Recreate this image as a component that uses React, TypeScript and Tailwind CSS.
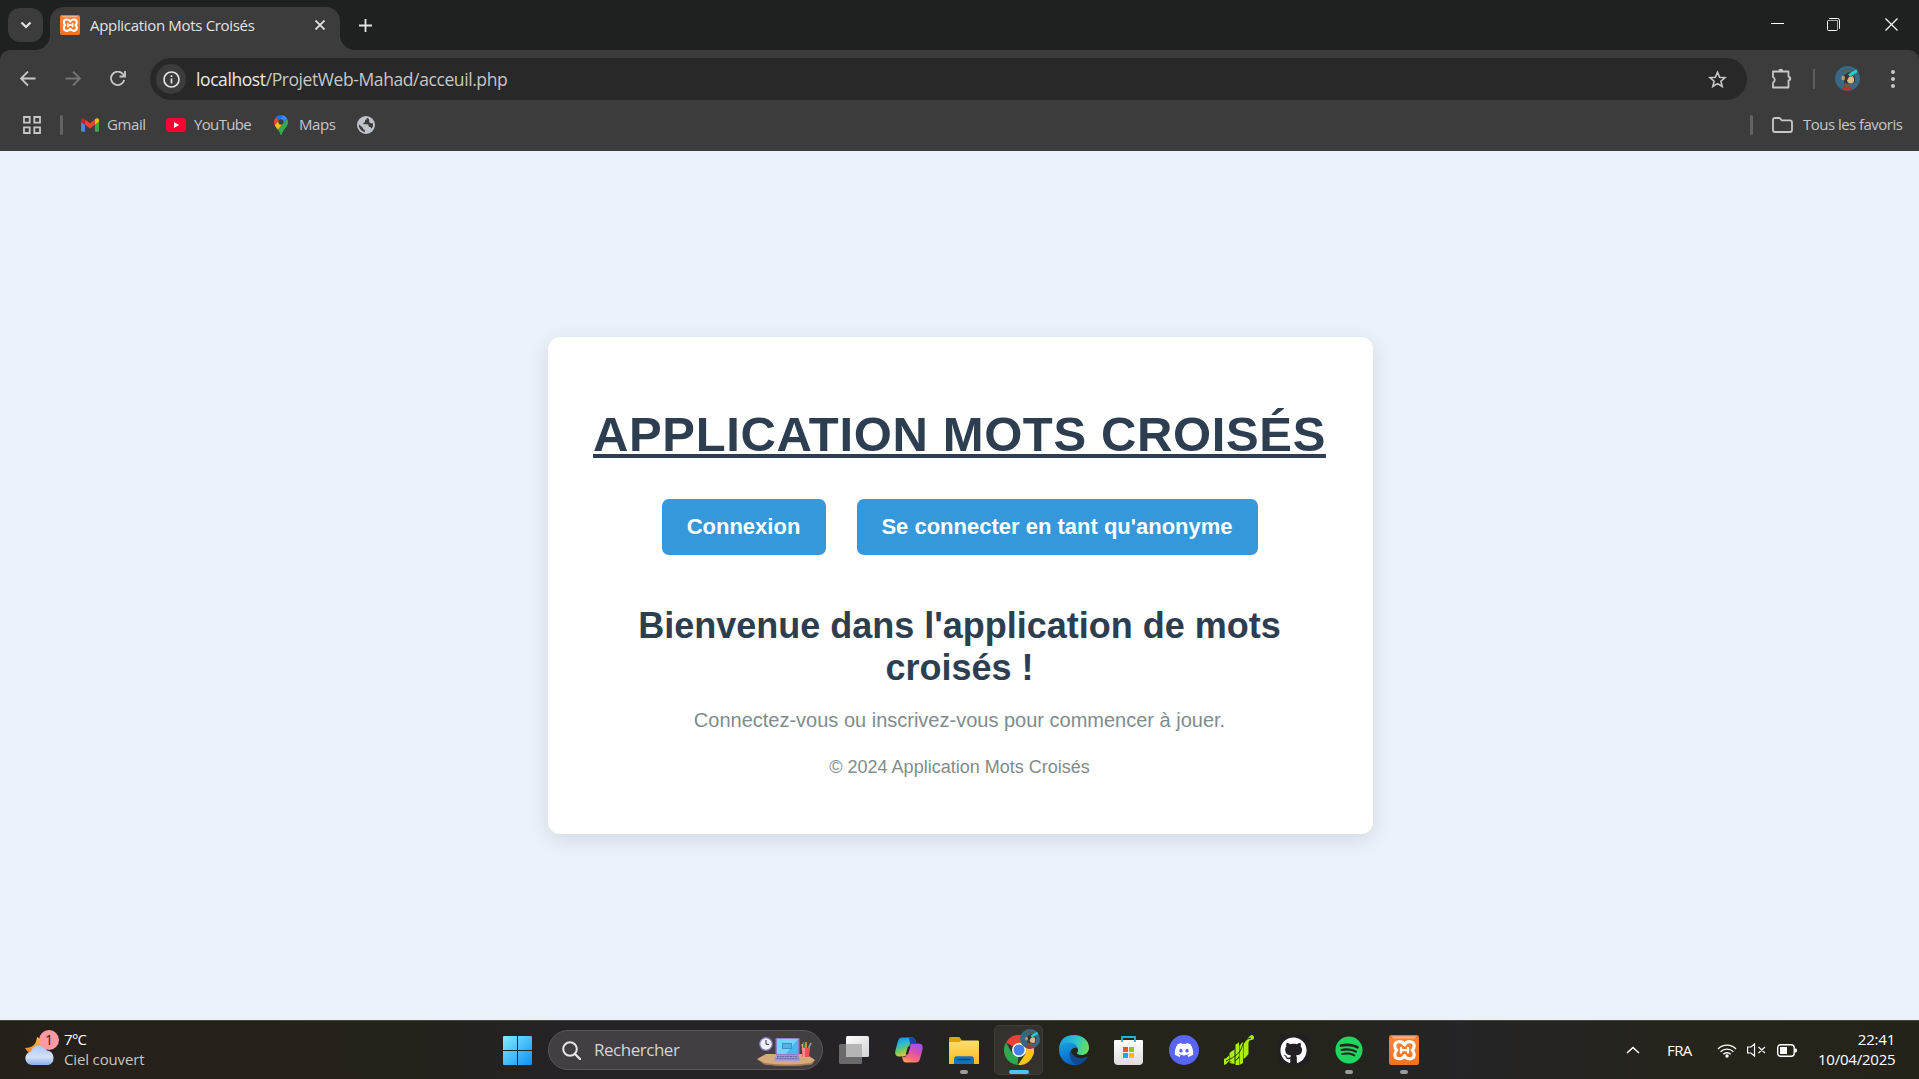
import React from "react";
import { FaDiscord, FaSpotify, FaGithub } from "react-icons/fa";

type IconProps = { className?: string };

function Xampp({ className }: IconProps) {
  return (
    <svg className={className} viewBox="0 0 30 30" fill="none">
      <defs><linearGradient id="xa" x2="0" y2="1"><stop stopColor="#e8732c" /><stop offset=".15" stopColor="#f98238" /><stop offset="1" stopColor="#f3721d" /></linearGradient></defs>
      <rect width="30" height="30" rx="2.500" fill="url(#xa)" />
      <path d="M3 1.500h24q0 2-3 2H6q-3 0-3-2z" fill="#fbb48a" />
      <path d="M15.500 9.800C13.500 5.500 5.800 5.500 5.800 11c0 2 .8 3.200 2 4.200-1.300 1-2 2.400-2 4.300 0 5.500 7.700 5.500 9.700 1.200 2 4.300 9.700 4.300 9.700-1.200 0-1.900-.7-3.300-2-4.300 1.200-1 2-2.200 2-4.200 0-5.500-7.700-5.500-9.700-1.200z" stroke="#fff" strokeWidth="3.200" strokeLinejoin="round" />
      <path d="M12 12.800v4.800M19 12.800v4.800M12 15.200h7" stroke="#fff" strokeWidth="2.300" strokeLinecap="round" />
    </svg>
  );
}

function Gmail() {
  return (
    <svg className="h-[14px] w-[18px]" viewBox="52 42 88 66">
      <path fill="#4285f4" d="M58 108h14V74L52 59v43c0 3.320 2.690 6 6 6" />
      <path fill="#34a853" d="M120 108h14c3.320 0 6-2.690 6-6V59l-20 15" />
      <path fill="#fbbc04" d="M120 48v26l20-15v-8c0-7.420-8.470-11.650-14.400-7.200" />
      <path fill="#ea4335" d="M72 74V48l24 18 24-18v26L96 92" />
      <path fill="#c5221f" d="M52 51v8l20 15V48l-5.600-4.200c-5.940-4.450-14.400-.22-14.400 7.200" />
    </svg>
  );
}

function MapsPin() {
  return (
    <svg className="h-[20px] w-[14px]" viewBox="0 0 92.300 132.300">
      <path fill="#1a73e8" d="M60.200 2.200C55.800.8 51 0 46.100 0 32 0 19.300 6.400 10.800 16.500l21.800 18.300L60.200 2.200z" />
      <path fill="#ea4335" d="M10.800 16.500C4.100 24.500 0 34.900 0 46.100c0 8.700 1.700 15.700 4.600 22l28-33.300-21.800-18.300z" />
      <path fill="#4285f4" d="M46.200 28.500c9.800 0 17.700 7.900 17.700 17.700 0 4.300-1.600 8.300-4.200 11.400 0 0 13.900-16.600 27.500-32.700-5.600-10.800-15.300-19-27-22.700L32.600 34.800c3.300-3.800 8.100-6.300 13.600-6.300" />
      <path fill="#fbbc04" d="M46.200 63.800c-9.800 0-17.700-7.900-17.700-17.700 0-4.300 1.500-8.300 4.100-11.300l-28 33.300c4.800 10.600 12.800 19.200 21 29.900l34.100-40.500c-3.300 3.900-8.100 6.300-13.500 6.300" />
      <path fill="#34a853" d="M59.100 109.200c15.400-24.100 33.300-35 33.300-63 0-7.700-1.900-14.900-5.200-21.300L25.600 98c2.600 3.400 5.300 7.300 7.900 11.300 9.400 14.500 6.800 23.100 12.800 23.100s3.400-8.700 12.800-23.200" />
    </svg>
  );
}

function Avatar({ className }: IconProps) {
  return (
    <svg className={className} viewBox="0 0 25 25">
      <circle cx="12.500" cy="12.500" r="12.500" fill="#386885" />
      <path d="M7.500 5.500q5-3 9.500-1" stroke="#5a5840" strokeWidth="1.200" fill="none" />
      <path d="M9 9l5-3 3 2 3 3v5l-3 2-4-1-2 5H9q1.500-4 0-7z" fill="#3d3328" />
      <path d="M6.500 10.500q2-1.500 3.500.5l-.5 3q-2 1-3-1z" fill="#b89c72" />
      <path d="M14 11l4-1 1 3q.5 4-2.500 4.500-4 0-4.500-3z" fill="#dbbb8c" />
      <path d="M10 17l4 1 1 4h-6z" fill="#6d5a36" />
      <path d="M6.500 21q5 1.800 11-.5l-1 3q-4.500 2-9 .3z" fill="#c62a31" />
      <path d="M13 8.500l8.500-5.200 1 2.800L15 10.700z" fill="#27d3cf" />
    </svg>
  );
}

function BrowserTop() {
  return (
    <header className="bg-[#1f2121] font-['Open_Sans',sans-serif] text-[#e3e3e3]">
      <div className="flex h-[50px] items-start">
        <button className="relative z-10 mt-2 ml-2 flex h-[34px] w-[35px] items-center justify-center rounded-[12px] bg-[#3c3c3c]">
          <svg className="h-[8px] w-[12px]" viewBox="0 0 12 8" fill="none" stroke="#e3e3e3" strokeWidth="2.200"><path d="M1.500 1.500 6 6l4.500-4.500" /></svg>
        </button>
        <div className="relative mt-[7px] ml-[7px] flex h-[43px] w-[290px] items-start rounded-t-[14px] bg-[#3c3c3c]">
          <span className="absolute bottom-0 -left-[15px] size-[15px] bg-[radial-gradient(circle_at_0_0,transparent_14.500px,#3c3c3c_15.500px)]" />
          <span className="absolute -right-[15px] bottom-0 size-[15px] bg-[radial-gradient(circle_at_100%_0,transparent_14.500px,#3c3c3c_15.500px)]" />
          <Xampp className="mt-2 ml-[10px] size-5 shrink-0" />
          <span className="mt-[8px] ml-[10px] w-[216px] text-[15px] leading-[20px] tracking-[-0.320px] whitespace-nowrap">Application Mots Croisés</span>
          <svg className="mt-[13px] ml-[9px] h-[10px] w-[10px]" viewBox="0 0 10 10" stroke="#e3e3e3" strokeWidth="1.800"><path d="M.5.500l9 9M9.500.500l-9 9" /></svg>
        </div>
        <svg className="mt-[19px] ml-[19px] h-[13px] w-[13px]" viewBox="0 0 13 13" stroke="#e3e3e3" strokeWidth="1.800"><path d="M6.500 0v13M0 6.500h13" /></svg>
        <div className="ml-auto flex">
          <svg className="mt-[23px] h-px w-[13px]" viewBox="0 0 13 1"><path d="M0 0h13v1H0z" fill="#fff" /></svg>
          <svg className="mt-[18px] ml-[43px] h-[13px] w-[13px]" viewBox="0 0 13 13" fill="none" stroke="#fff"><path d="M2.500 1V.5h8q2 0 2 2v8H12" /><rect x=".5" y="2.500" width="10" height="10" rx="1" /><path d="M10.500 12V2.500H2" stroke="#aaa" /></svg>
          <svg className="mt-[18px] mr-[21px] ml-[45px] h-[13px] w-[13px]" viewBox="0 0 13 13" stroke="#fff" strokeWidth="1.200"><path d="M.5.500l12 12M12.500.500l-12 12" /></svg>
        </div>
      </div>

      <div className="h-[101px] rounded-t-[10px] bg-[#3c3c3c]">
        <div className="flex h-[58px] items-center">
          <svg className="ml-[20px] h-4 w-4" viewBox="0 0 16 16" fill="none" stroke="#c7c7c7" strokeWidth="1.800"><path d="M15.500 7.500H1.500M8 .5l-7 7 7 7" /></svg>
          <svg className="ml-[29px] h-4 w-4" viewBox="0 0 16 16" fill="none" stroke="#757575" strokeWidth="1.800"><path d="M.5 7.500h14M8 .5l7 7-7 7" /></svg>
          <svg className="ml-[29px] h-4 w-4" viewBox="0 0 16 16" fill="none" stroke="#c7c7c7" strokeWidth="1.800"><path d="M14.200 9A6.700 6.700 0 1 1 12.700 2.900L15 5.500" /><path d="M15 0V5.500H9.500" /></svg>
          <div className="ml-[24px] flex h-[42px] w-[1597px] items-center rounded-full bg-[#282828]">
            <span className="ml-[6px] flex size-[30px] items-center justify-center rounded-full bg-[#3c3c3c]">
              <svg className="size-[17px]" viewBox="0 0 17 17" fill="none" stroke="#e3e3e3" strokeWidth="1.700"><circle cx="8.500" cy="8.500" r="7.500" /><path d="M8.500 7.500v5M8.500 4.300V6" /></svg>
            </span>
            <span className="ml-[10px] text-[17.500px] leading-6 tracking-[-0.410px] whitespace-nowrap text-[#c7c7c7]"><span className="text-[#e8e8e8]">localhost</span>/ProjetWeb-Mahad/acceuil.php</span>
            <svg className="mr-[20px] ml-auto h-[19px] w-[19px]" viewBox="0 0 19 19" fill="none" stroke="#c7c7c7" strokeWidth="1.600"><path d="M9.500 2.300l2.100 5 5.400.4-4.100 3.500 1.300 5.300-4.700-2.900-4.700 2.900 1.300-5.300L2 7.700l5.400-.4z" /></svg>
          </div>
          <svg className="ml-[24px] h-[22px] w-[22px]" viewBox="0 0 22 22" fill="none" stroke="#c7c7c7" strokeWidth="1.800"><path d="M2 3.500h15.500v5.300a1.800 1.800 0 0 1 0 3.600V19.500H2v-4.800a3.200 3.200 0 0 0 0-5.700z" strokeLinejoin="round" /><path d="M7.500 3a2.300 2.300 0 0 1 4.600 0zM18 8.700a2 2 0 0 1 0 4z" fill="#c7c7c7" stroke="none" /></svg>
          <span className="ml-[20px] h-5 w-[2px] bg-[#5c5c5c]" />
          <Avatar className="mb-px ml-[20px] h-[25px] w-[25px]" />
          <svg className="mb-px ml-[31px] h-[18px] w-[4px]" viewBox="0 0 4 18" fill="#c7c7c7"><circle cx="2" cy="2" r="2" /><circle cx="2" cy="9" r="2" /><circle cx="2" cy="16" r="2" /></svg>
        </div>
        <div className="flex h-[34px] items-center text-[15px] tracking-[-0.400px] text-[#c7c7c7]">
          <svg className="ml-[23px] h-[18px] w-[18px]" viewBox="0 0 18 18" fill="none" stroke="#c7c7c7" strokeWidth="1.800"><path d="M1 1h5.700v5.700H1zM11.300 1H17v5.700h-5.700zM1 11.300h5.700V17H1zM11.300 11.300H17V17h-5.700z" /></svg>
          <span className="mr-[18px] ml-[19px] h-5 w-[3px] rounded-full bg-[#636363]" />
          <Gmail />
          <span className="mb-[2px] ml-[8px] w-[59px]">Gmail</span>
          <svg className="h-[14px] w-5" viewBox="0 0 20 14"><rect width="20" height="14" rx="3.500" fill="#ff0033" /><path d="M8 4l5 3-5 3z" fill="#fff" /></svg>
          <span className="mb-[2px] ml-[8px] w-[80px] tracking-[-0.650px]">YouTube</span>
          <MapsPin />
          <span className="mb-[2px] ml-[11px] w-[58px]">Maps</span>
          <svg className="h-[18px] w-[18px]" viewBox="0 0 18 18"><circle cx="9" cy="9" r="9" fill="#c0c4ca" /><path d="M10 1.800q-.2 2-2 2.500v2q-2 .2-1.700 1.900h4q1.400 0 1.400 2.400 2 .5 3 2.200 2-2.600 1.200-5.700-1.400.6-3.400-.7-.6-1.700-.4-3.300-1-.4-2.100-1.300M1.800 8.300q-.2 6 6 8v-2.400q-2-.2-2-2.200z" fill="#3c3c3c" /></svg>
          <span className="ml-auto h-5 w-[3px] rounded-full bg-[#636363]" />
          <svg className="ml-[19px] h-4 w-[21px]" viewBox="0 0 21 16" fill="none" stroke="#c7c7c7" strokeWidth="1.800"><path d="M1 3q0-2 2-2h4.500l2.300 2.400H18q2 0 2 2V13q0 2-2 2H3q-2 0-2-2z" /></svg>
          <span className="mr-[17px] mb-[2px] ml-[10px] w-[99px] tracking-[-0.530px] whitespace-nowrap">Tous les favoris</span>
        </div>
      </div>
    </header>
  );
}

function WelcomePage() {
  return (
    <main className="flex h-[869px] justify-center bg-[#eaf1f8] pl-[2px] font-['Liberation_Sans',Arial,sans-serif]">
      <section className="mt-[186px] flex h-[497px] w-[825px] flex-col items-center rounded-[12px] bg-white pr-[2px] text-center shadow-[0_5px_19px_rgba(0,0,0,0.1)]">
        <h1 className="mt-[69px] text-[49px] leading-[56px] font-bold tracking-[0.630px] whitespace-nowrap text-[#2c3e50] uppercase underline decoration-[4px] underline-offset-[3px]">Application Mots Croisés</h1>
        <div className="mt-[37px] flex gap-[31px] text-[22px] leading-[33px] font-bold text-white">
          <button className="h-[56px] w-[164px] rounded-[7px] bg-[#3498db] pb-[2px]">Connexion</button>
          <button className="h-[56px] w-[401px] rounded-[7px] bg-[#3498db] pb-[2px]">Se connecter en tant qu'anonyme</button>
        </div>
        <h2 className="mt-[50px] w-[725px] text-[36px] leading-[42px] font-bold text-[#2c3e50]">Bienvenue dans l'application de mots croisés !</h2>
        <p className="mt-[19px] text-[20px] leading-[24px] text-[#7f8c8d]">Connectez-vous ou inscrivez-vous pour commencer à jouer.</p>
        <p className="mt-[25px] text-[18px] leading-[20px] text-[#7f8c8d]">© 2024 Application Mots Croisés</p>
      </section>
    </main>
  );
}

function Cell({ children, state }: { children: React.ReactNode; state?: "open" | "active" }) {
  return (
    <div className={`relative flex h-[50px] w-[55px] shrink-0 items-center justify-center ${state === "active" ? "before:absolute before:inset-x-[3px] before:inset-y-0 before:rounded-[5px] before:border before:border-[#403d38] before:bg-[#35322e]" : ""}`}>
      <div className="relative flex">{children}</div>
      {state === "open" && <span className="absolute bottom-[1px] left-[24px] h-[4px] w-[8px] rounded-full bg-[#9b9b99]" />}
      {state === "active" && <span className="absolute bottom-[1px] left-[18px] h-[4px] w-[20px] rounded-full bg-[#4cc2ff]" />}
    </div>
  );
}

function SearchScene() {
  return (
    <svg className="h-[30px] w-[58px]" viewBox="0 0 58 30">
      <path d="M0 22 9 17h40l9 6-4 4q-25 3-46 0z" fill="#d3ab7c" />
      <path d="M0 22l8 4q22 3 46 0l4-3-3 4.500q-24 3-48 0z" fill="#a67b50" />
      <circle cx="9" cy="7" r="6.300" fill="#eff0fa" stroke="#7b76ac" strokeWidth="1.200" />
      <path d="M9 3v4.300h3" stroke="#333" fill="none" />
      <rect x="18.500" y="1" width="24" height="17" rx="1.200" fill="#8684c6" />
      <rect x="20" y="2" width="21" height="15" fill="#46b8ef" />
      <path d="M20 2h21L29 17h-9z" fill="#71d4f8" />
      <rect x="25" y="6" width="10" height="6" fill="#3a93cd" />
      <path d="M26 8h8M26 10h8" stroke="#8be0fa" strokeWidth=".8" />
      <path d="M19 18h23l1 6H17z" fill="#9e9bcb" />
      <path d="M20 19.500h21M19.500 21.500h22" stroke="#6866a0" strokeDasharray="2 .6" />
      <path d="M46 12l-1-5M49 12V5M51 12l3-6" stroke="#e0a53a" strokeWidth="1.600" /><path d="M48 11l-2-6" stroke="#46905f" strokeWidth="1.400" /><path d="M51.500 11l2.500-4" stroke="#4790e0" strokeWidth="1.400" />
      <path d="M44.500 11h8.500l-1 9h-6.500z" fill="#ed4e58" /><path d="M45 11h3v9h-2z" fill="#fb8c8b" />
    </svg>
  );
}

function Taskbar() {
  return (
    <footer className="flex h-[59px] items-center border-t border-[#48483f] bg-[linear-gradient(90deg,#25211a_0%,#25211b_22%,#252328_31%,#252327_45%,#25241b_56%,#24241b_68%,#252426_76%,#25251a_90%,#25221a_100%)] font-['Open_Sans',sans-serif] text-[15px]">
      <div className="flex w-[490px] items-center">
        <div className="relative ml-[25px] h-[38px] w-[34px] -translate-y-[2px]">
          <svg className="h-[38px] w-[34px]" viewBox="0 0 34 38">
            <defs><linearGradient id="cl" x2="0" y2="1"><stop stopColor="#a9c7f5" /><stop offset=".6" stopColor="#d4e1f8" /><stop offset="1" stopColor="#89aeea" /></linearGradient><linearGradient id="mo" x2="0" y2="1"><stop stopColor="#f8c733" /><stop offset="1" stopColor="#f07a23" /></linearGradient></defs>
            <path d="M12 8q9 4 6 12t-13 4q-3-1-5-5 11 0 12-11z" fill="url(#mo)" />
            <path d="M7 36a6.800 6.800 0 0 1-1-13.500 8.500 8.500 0 0 1 16-1A7.500 7.500 0 0 1 23.500 36z" fill="url(#cl)" />
          </svg>
          <span className="absolute top-[1px] left-[14px] flex size-5 items-center justify-center rounded-full bg-[#ff99a4] text-[14px] leading-none text-[#222]">1</span>
        </div>
        <div className="ml-[5px] pb-[3px] leading-[20px] tracking-[-0.150px] text-[#c7c5c3]">
          <div className="tracking-[-0.700px] text-white">7°C</div>
          <div>Ciel couvert</div>
        </div>
      </div>
      <Cell>
        <svg className="size-[29px]" viewBox="0 0 29 29">
          <defs><linearGradient id="win" x2="1" y2="1"><stop stopColor="#80edff" /><stop offset="1" stopColor="#0d90f5" /></linearGradient></defs>
          <path d="M1 0h13v14H0V1q0-1 1-1zM15 0h13q1 0 1 1v13H15zM0 15h14v14H1q-1 0-1-1zM15 15h14v13q0 1-1 1H15z" fill="url(#win)" />
        </svg>
      </Cell>
      <div className="mx-[3px] flex h-[40px] w-[275px] shrink-0 items-center rounded-full border border-[#5b575c] bg-[#423e42] pr-[7px]">
        <svg className="ml-[13px] h-[19px] w-[19px]" viewBox="0 0 19 19" fill="none" stroke="#e6e6e6" strokeWidth="2"><circle cx="8" cy="8" r="6.800" /><path d="M13 13l5 5" strokeLinecap="round" strokeWidth="2.400" /></svg>
        <span className="ml-[13px] text-[17px] tracking-[-0.480px] text-[#d6d4d6]">Rechercher</span>
        <span className="ml-auto translate-y-[2px]"><SearchScene /></span>
      </div>
      <Cell>
        <svg className="h-[28px] w-[30px]" viewBox="0 0 30 28">
          <defs><linearGradient id="tv" x2="1" y2="1"><stop stopColor="#fff" /><stop offset="1" stopColor="#d2d2d2" /></linearGradient></defs>
          <rect x="7" y="0" width="23" height="21" rx="1.500" fill="url(#tv)" />
          <rect x="0" y="8" width="23" height="20" rx="1.500" fill="#747474" fillOpacity=".88" />
          <path d="M7 8h16v13H7z" fill="#b5b5b5" />
        </svg>
      </Cell>
      <Cell>
        <svg className="h-[26px] w-[28px]" viewBox="0 0 28 26">
          <defs>
            <linearGradient id="cp1" x2=".4" y2="1"><stop stopColor="#147fe8" /><stop offset=".35" stopColor="#27b5df" /><stop offset=".65" stopColor="#64c96c" /><stop offset="1" stopColor="#f1c632" /></linearGradient>
            <linearGradient id="cp2" x1=".7" x2=".2" y2="1"><stop stopColor="#a350ec" /><stop offset=".4" stopColor="#d852ad" /><stop offset=".75" stopColor="#fb6d77" /><stop offset="1" stopColor="#ffa158" /></linearGradient>
          </defs>
          <path d="M7 .5h10q2.500 0 3.500 3.500l.6 2H17q-2 0-2.700 2.500L12 16q-1 3.500-4 3.500H4Q-.5 19.500.3 14L3 4Q4 .5 7 .5z" fill="url(#cp1)" />
          <path d="M14 .5h3q2.500 0 3.500 3.500l.6 2H17q-1 0-2 1z" fill="#1546b8" />
          <path d="M21 25.500H11q-2.500 0-3.500-3.500L7 20h2q2 0 2.800-2.500L14 10q1-3.500 4-3.500h5.500q4.800 0 4.200 5L25 22q-1 3.500-4 3.500z" fill="url(#cp2)" />
          <path d="M13 9.500h2.500L13 17.300h-2.300z" fill="#242228" />
        </svg>
      </Cell>
      <Cell state="open">
        <svg className="h-[27px] w-[30px]" viewBox="0 0 30 27">
          <defs><linearGradient id="fo" x2="0" y2="1"><stop stopColor="#ffde70" /><stop offset="1" stopColor="#f7bb1e" /></linearGradient></defs>
          <path d="M0 1.500Q0 0 1.500 0h9l3 4.500V9H0z" fill="#e2a20c" />
          <path d="M0 6q0-1 1-1h9.500l2-1.500H29q1 0 1 1V27H0z" fill="url(#fo)" />
          <path d="M5 27v-5q0-2.800 3-2.800h14q3 0 3 2.800v5z" fill="#1074bd" /><path d="M8.500 22.500h13" stroke="#074579" strokeWidth="1.300" />
        </svg>
      </Cell>
      <Cell state="active">
        <svg className="size-[30px]" viewBox="0 0 30 30">
          <path d="M15 15 2 7.500A15 15 0 0 1 28 7.500H15z" fill="#e94235" />
          <path d="M15 15 13.500 30A15 15 0 0 1 2 7.500l6.500 11.300z" fill="#2fa84f" />
          <path d="M15 15l6.500 3.700L14 30A15 15 0 0 0 28 7.500H15z" fill="#fcc31e" />
          <circle cx="15" cy="15" r="7" fill="#fff" /><circle cx="15" cy="15" r="5.500" fill="#4280ee" />
        </svg>
        <Avatar className="absolute -top-[6px] left-[16px] size-5" />
      </Cell>
      <Cell>
        <svg className="size-[30px]" viewBox="0 0 30 30">
          <defs>
            <linearGradient id="e1" y1=".3" x2="1" y2=".5"><stop stopColor="#1b9de0" /><stop offset=".55" stopColor="#2fc2cf" /><stop offset="1" stopColor="#68e056" /></linearGradient>
            <linearGradient id="e2" x2=".4" y2="1"><stop stopColor="#1aa3e4" /><stop offset="1" stopColor="#0a63c4" /></linearGradient>
          </defs>
          <path d="M0 14Q1 0 15 0c9 0 15 6 15 12.500 0 5-3.500 7.500-7.500 7.500-3 0-5-1-4.500-2.200.7-1 1-1.800 1-2.800 0-3-3-6-8-6C5 9 1 12 0 14z" fill="url(#e1)" />
          <path d="M0 15C0 11 4 7.500 10 7.500c4.500 0 8 3 9 6.500-2-2.500-6.500-1.500-7.500 3-1 5 3 11 9 12A15 15 0 0 1 0 15z" fill="url(#e2)" />
          <path d="M12 15c-3 4-1 11 5 14.700 5 .4 9-3 11.500-7.200.4-.8-.2-1-.8-.7C20 25.500 12 21 12 15z" fill="#114a8e" />
        </svg>
      </Cell>
      <Cell>
        <svg className="h-[30px] w-[29px]" viewBox="0 0 29 30">
          <defs><linearGradient id="st" x2="0" y2="1"><stop stopColor="#fff" /><stop offset="1" stopColor="#dcdcdc" /></linearGradient></defs>
          <path d="M1 5h27q1 0 1 1v20q0 4-4 4H4q-4 0-4-4V6q0-1 1-1z" fill="url(#st)" />
          <path d="M8 7V2h13v5" fill="none" stroke="#25aee6" strokeWidth="1.800" />
          <path d="M9 12h5v5H9z" fill="#f1511b" /><path d="M15 12h5v5h-5z" fill="#80cc28" /><path d="M9 18h5v5H9z" fill="#00adef" /><path d="M15 18h5v5h-5z" fill="#fbbc09" />
        </svg>
      </Cell>
      <Cell><span className="flex size-[30px] items-center justify-center rounded-full bg-[#5865f2]"><FaDiscord className="size-[20px] text-white" /></span></Cell>
      <Cell>
        <svg className="size-[30px]" viewBox="0 0 30 30" fill="#a6f000">
          <path d="M0 24q3-1 5-3.500V26q-2 3-5 4zM5.500 18q2-2 5-3.500V24q-2 2-5 3zM11.500 9.500q3-1.500 3.500-2.500v14q-1 2-3.500 4zM15.500 11q2-3 3.500-4v21l-3.500 2zM5.500 28l5-4v5zM11.500 26l3.500-3v7h-3.500zM19.500 9q2-4 5-5v15q-2 3-5 5z" />
          <path d="M22 6q3-5 5.500-6Q30 0 30 2.500T27 5q-2 0-3 3z" />
          <path d="M2 26Q16 20 18 12T27 3" fill="none" stroke="#25241b" strokeWidth=".9" />
        </svg>
      </Cell>
      <Cell><span className="flex size-[30px] items-center justify-center bg-[#222025]"><FaGithub className="size-[27px] text-white" /></span></Cell>
      <Cell state="open"><FaSpotify className="size-[28px] text-[#1ed760]" /></Cell>
      <Cell state="open"><Xampp className="size-[30px]" /></Cell>
      <div className="ml-auto flex items-center text-white">
        <svg className="h-[8px] w-[14px]" viewBox="0 0 14 8" fill="none" stroke="#fff" strokeWidth="1.600"><path d="M1 7l6-5.500L13 7" /></svg>
        <span className="ml-[27px] w-[26px] text-[15px] tracking-[-0.600px]">FRA</span>
        <svg className="ml-[24px] h-[15px] w-[20px]" viewBox="0 0 20 15" fill="none" stroke="#fff" strokeWidth="1.400"><path d="M1 6a12.500 12.500 0 0 1 18 0M3.600 8.800a9 9 0 0 1 12.800 0M6.300 11.300a5.200 5.200 0 0 1 7.400 0" /><circle cx="10" cy="13" r="1.700" fill="#fff" stroke="none" /></svg>
        <svg className="ml-[10px] h-[14px] w-[19px]" viewBox="0 0 19 14" fill="none" stroke="#fff" strokeWidth="1.200"><path d="M7.500 1v12L4 10H.6V4H4zM11.500 4l6.500 6M18 4l-6.500 6" /></svg>
        <svg className="ml-[11px] h-[13px] w-[20px]" viewBox="0 0 20 13" fill="none"><rect x=".7" y=".7" width="16.500" height="11.600" rx="3" stroke="#fff" strokeWidth="1.400" /><path d="M3 3h7v7H3z" fill="#fff" /><path d="M18 4.500h1q1 0 1 2t-1 2h-1z" fill="#fff" /></svg>
        <div className="mr-[24px] ml-[21px] w-[77px] pb-[3px] text-right text-[15px] leading-[20px] tracking-[-0.220px] whitespace-nowrap"><div>22:41</div><div>10/04/2025</div></div>
      </div>
    </footer>
  );
}

export default function App() {
  return (
    <div className="flex h-[1079px] w-[1919px] flex-col overflow-hidden">
      <BrowserTop />
      <WelcomePage />
      <Taskbar />
    </div>
  );
}
